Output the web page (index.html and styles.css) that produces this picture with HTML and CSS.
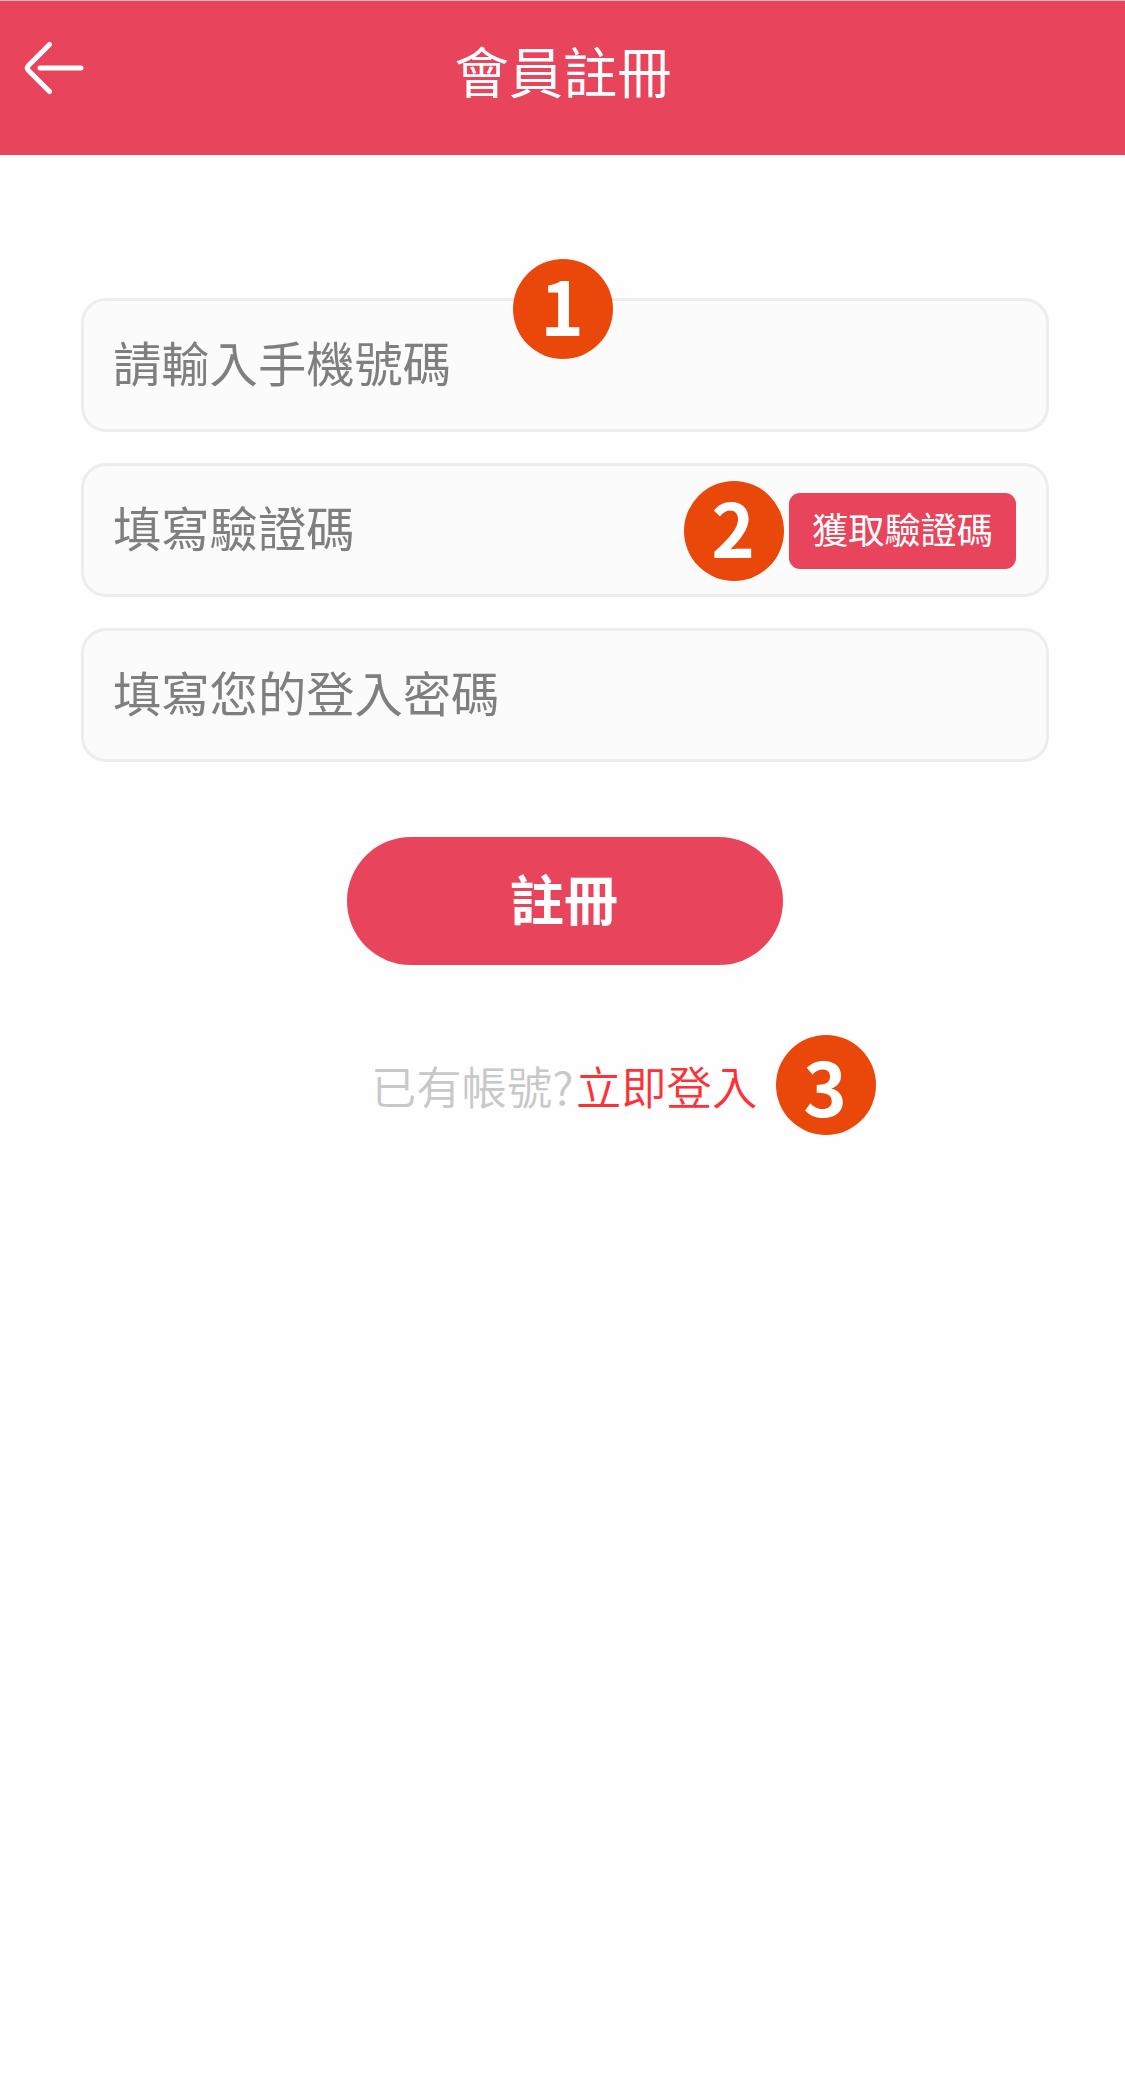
FILE: index.html
```html
<!DOCTYPE html>
<html lang="zh-Hant">
<head>
    <meta charset="UTF-8">
    <meta name="viewport" content="width=device-width, initial-scale=1.0">
    <title>會員註冊</title>
    <link rel="stylesheet" href="styles.css">
</head>
<body>
    <header class="header">
        <a href="#" class="back">
            <svg class="back-icon" viewBox="0 0 60 54" fill="none" stroke="currentColor" stroke-width="5" stroke-linecap="round" stroke-linejoin="round">
                <path d="M25.5 3.5L4.5 24.5Q2 27 4.5 29.5L25.5 50.5M16 27H57"></path>
            </svg>
        </a>
        <h1 class="title">會員註冊</h1>
    </header>

    <form class="form">
        <div class="field">
            <input type="tel" class="field-input" placeholder="請輸入手機號碼">
            <span class="step step-phone">1</span>
        </div>
        <div class="field">
            <input type="text" class="field-input" placeholder="填寫驗證碼">
            <span class="step step-code">2</span>
            <button type="button" class="btn-code">獲取驗證碼</button>
        </div>
        <div class="field">
            <input type="password" class="field-input" placeholder="填寫您的登入密碼">
        </div>
        <button type="button" class="btn-register">註冊</button>
    </form>

    <p class="login">
        <span class="login-text">已有帳號?</span><a href="#" class="login-link">立即登入</a>
        <span class="step step-login">3</span>
    </p>
</body>
</html>
```
FILE: styles.css
```css
* {
    box-sizing: border-box;
}

body {
    margin: 0;
    min-height: 2081px;
    background: #fefefe;
    font-family: "Noto Sans CJK TC", "Noto Sans", sans-serif;
}

.header {
    display: grid;
    grid-template-columns: 1fr auto 1fr;
    height: 155px;
    border-top: 1px solid #e9bcc4;
    background: #e8445b;
    color: #fff;
}

.back {
    display: flex;
    padding: 40px 0 0 24px;
    color: #fff;
}

.back-icon {
    width: 60px;
    height: 54px;
}

.title {
    margin: 0;
    padding: 29px 0 0 1px;
    font-size: 54.3px;
    font-weight: 400;
    line-height: 80px;
}

.form {
    display: flex;
    flex-direction: column;
    gap: 31px;
    padding: 143px 76px 0 81px;
}

.field {
    position: relative;
    display: flex;
    align-items: center;
    height: 134px;
    padding: 0 30px 0 29px;
    border: 3px solid #ededed;
    border-radius: 25px;
    background: #fbfbfb;
}

.field-input {
    flex: 1;
    min-width: 0;
    height: 72px;
    margin-bottom: 8px;
    padding: 0;
    border: none;
    outline: none;
    background: transparent;
    font-family: inherit;
    font-size: 48.3px;
}

.field-input::placeholder {
    color: #7f7f7f;
}

.btn-code {
    width: 227px;
    height: 76px;
    margin-top: 2px;
    padding: 0 0 6px;
    border: none;
    border-radius: 11px;
    background: #e8445b;
    color: #fff;
    font-family: inherit;
    font-size: 36.2px;
}

.btn-register {
    align-self: center;
    width: 436px;
    height: 128px;
    margin: 44px 0 0;
    padding: 0 2px 7px 0;
    border: none;
    border-radius: 64px;
    background: #e8445b;
    color: #fff;
    font-family: inherit;
    font-size: 54px;
    font-weight: 700;
}

.login {
    display: flex;
    align-items: center;
    height: 100px;
    margin: 70px 0 0;
    padding-left: 371px;
    font-size: 45.3px;
    font-weight: 350;
    line-height: 66px;
}

.login-text {
    width: 205px;
    color: #c8c8c8;
}

.login-link {
    color: #fc3238;
    text-decoration: none;
}

/* numbered markers */
.step {
    width: 100px;
    height: 100px;
    padding-right: 2px;
    border-radius: 50%;
    background: #ea470a;
    color: #fff;
    font-size: 74px;
    font-weight: 700;
    line-height: 89px;
    text-align: center;
}

.step-phone {
    position: absolute;
    top: -42px;
    left: 429px;
}

.step-code {
    margin: 2px 5px 0 0;
}

.step-login {
    margin-left: 19px;
    line-height: 99px;
}
```
